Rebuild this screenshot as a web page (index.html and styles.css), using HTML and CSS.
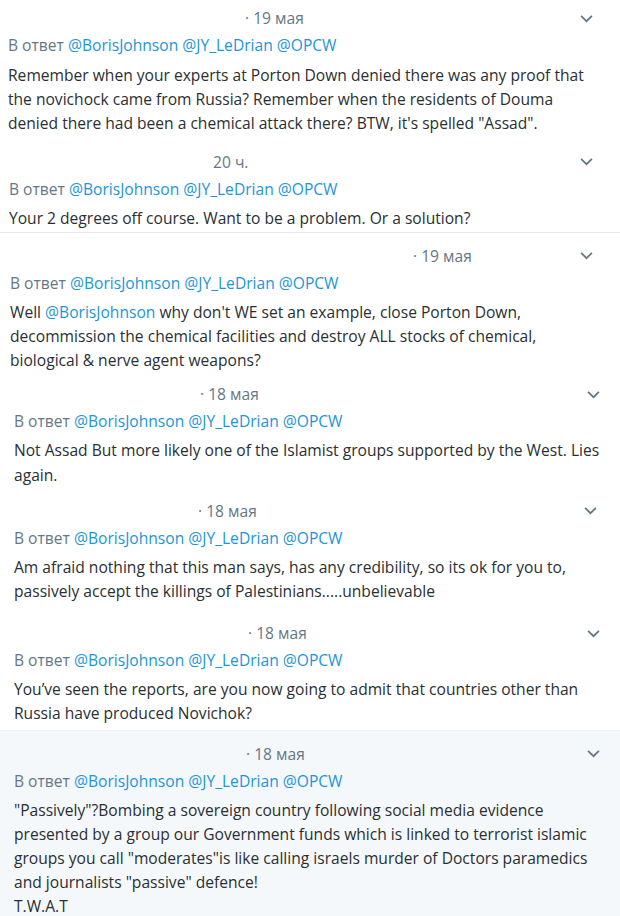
FILE: index.html
```html
<!DOCTYPE html>
<html lang="ru">
<head>
    <meta charset="UTF-8">
    <meta name="viewport" content="width=device-width, initial-scale=1.0">
    <title>Ответы</title>
    <link rel="stylesheet" href="styles.css">
</head>
<body>

    <div id="replies">

        <div class="tweet tweet-first indent-8">
            <div class="tweet-head">
                <span class="tweet-date date-237">· 19 мая</span>
                <span class="caret caret-587"><svg viewBox="0 0 12 8"><path d="M1 1.5 L6 6.5 L11 1.5"/></svg></span>
            </div>
            <div class="reply-to">В ответ <a>@BorisJohnson</a> <a>@JY_LeDrian</a> <a>@OPCW</a></div>
            <p class="tweet-text">Remember when your experts at Porton Down denied there was any proof that the novichock came from Russia? Remember when the residents of Douma denied there had been a chemical attack there? BTW, it's spelled "Assad".</p>
        </div>

        <div class="tweet tweet-split indent-9">
            <div class="tweet-head">
                <span class="tweet-date date-204">20 ч.</span>
                <span class="caret caret-587"><svg viewBox="0 0 12 8"><path d="M1 1.5 L6 6.5 L11 1.5"/></svg></span>
            </div>
            <div class="reply-to">В ответ <a>@BorisJohnson</a> <a>@JY_LeDrian</a> <a>@OPCW</a></div>
            <p class="tweet-text">Your 2 degrees off course. Want to be a problem. Or a solution?</p>
        </div>

        <div class="tweet gap-0 indent-10">
            <div class="tweet-head">
                <span class="tweet-date date-403">· 19 мая</span>
                <span class="caret caret-587"><svg viewBox="0 0 12 8"><path d="M1 1.5 L6 6.5 L11 1.5"/></svg></span>
            </div>
            <div class="reply-to">В ответ <a>@BorisJohnson</a> <a>@JY_LeDrian</a> <a>@OPCW</a></div>
            <p class="tweet-text">Well <a>@BorisJohnson</a> why don't WE set an example, close Porton Down, decommission the chemical facilities and destroy ALL stocks of chemical, biological &amp; nerve agent weapons?</p>
        </div>

        <div class="tweet gap-2 indent-14">
            <div class="tweet-head">
                <span class="tweet-date date-186">· 18 мая</span>
                <span class="caret caret-592"><svg viewBox="0 0 12 8"><path d="M1 1.5 L6 6.5 L11 1.5"/></svg></span>
            </div>
            <div class="reply-to">В ответ <a>@BorisJohnson</a> <a>@JY_LeDrian</a> <a>@OPCW</a></div>
            <p class="tweet-text">Not Assad But more likely one of the Islamist groups supported by the West. Lies again.</p>
        </div>

        <div class="tweet gap-8 indent-14">
            <div class="tweet-head">
                <span class="tweet-date date-184">· 18 мая</span>
                <span class="caret caret-590"><svg viewBox="0 0 12 8"><path d="M1 1.5 L6 6.5 L11 1.5"/></svg></span>
            </div>
            <div class="reply-to">В ответ <a>@BorisJohnson</a> <a>@JY_LeDrian</a> <a>@OPCW</a></div>
            <p class="tweet-text">Am afraid nothing that this man says, has any credibility, so its ok for you to, passively accept the killings of Palestinians.....unbelievable</p>
        </div>

        <div class="tweet gap-4 indent-14">
            <div class="tweet-head">
                <span class="tweet-date date-234">· 18 мая</span>
                <span class="caret caret-592"><svg viewBox="0 0 12 8"><path d="M1 1.5 L6 6.5 L11 1.5"/></svg></span>
            </div>
            <div class="reply-to">В ответ <a>@BorisJohnson</a> <a>@JY_LeDrian</a> <a>@OPCW</a></div>
            <p class="tweet-text">You’ve seen the reports, are you now going to admit that countries other than Russia have produced Novichok?</p>
        </div>

        <div class="tweet tweet-focus indent-14">
            <div class="tweet-head">
                <span class="tweet-date date-232">· 18 мая</span>
                <span class="caret caret-592"><svg viewBox="0 0 12 8"><path d="M1 1.5 L6 6.5 L11 1.5"/></svg></span>
            </div>
            <div class="reply-to">В ответ <a>@BorisJohnson</a> <a>@JY_LeDrian</a> <a>@OPCW</a></div>
            <p class="tweet-text">"Passively"?Bombing a sovereign country following social media evidence presented by a group our Government funds which is linked to terrorist islamic groups you call "moderates"is like calling israels murder of Doctors paramedics and journalists "passive" defence!<br>T.W.A.T</p>
        </div>

    </div>

</body>
</html>
```

FILE: styles.css
```css
body {
    font-family: 'Open Sans', 'Noto Sans', sans-serif;
    background-color: #fff;
    color: #292f33;
    margin: 0;
}

#replies {
    width: 620px;
}

.tweet {
    padding-top: 10px;
    padding-bottom: 4px;
    padding-right: 14px;
}

.tweet-first {
    padding-top: 6px;
}

.tweet-first .tweet-text {
    margin-top: 6px;
}

.tweet-split {
    border-bottom: 1px solid #e6ecf0;
    padding-bottom: 2px;
}

.tweet-split + .tweet {
    padding-top: 11px;
}

.gap-0 { padding-bottom: 0; }
.gap-2 { padding-bottom: 2px; }
.gap-4 { padding-bottom: 4px; }
.gap-8 { padding-bottom: 8px; }

.tweet-focus {
    background-color: #f5f8fa;
    border-top: 1px solid #eef2f5;
    padding-top: 11px;
    padding-bottom: 20px;
}

.indent-8 { padding-left: 8px; }
.indent-9 { padding-left: 9px; }
.indent-10 { padding-left: 10px; }
.indent-14 { padding-left: 14px; }

.tweet-head {
    display: flex;
    align-items: center;
    height: 24px;
}

.tweet-date {
    font-size: 15.6px;
    color: #657786;
}

.date-237 { margin-left: 237px; }
.date-204 { margin-left: 204px; }
.date-403 { margin-left: 403px; }
.date-186 { margin-left: 186px; }
.date-184 { margin-left: 184px; }
.date-234 { margin-left: 234px; }
.date-232 { margin-left: 232px; }

.caret {
    display: flex;
    margin-left: auto;
    width: 13px;
    height: 9px;
}

.caret svg {
    width: 13px;
    height: 9px;
    fill: none;
    stroke: #657786;
    stroke-width: 1.6;
}

.caret-587 { margin-right: 13px; }
.caret-590 { margin-right: 9px; }
.caret-592 { margin-right: 6px; }

.reply-to {
    margin-top: 3px;
    font-size: 15.6px;
    line-height: 24px;
    color: #657786;
}

a {
    color: #1b95e0;
    text-decoration: none;
}

.tweet-text {
    margin: 5px 0 0;
    font-size: 15.6px;
    line-height: 24.2px;
}
```
